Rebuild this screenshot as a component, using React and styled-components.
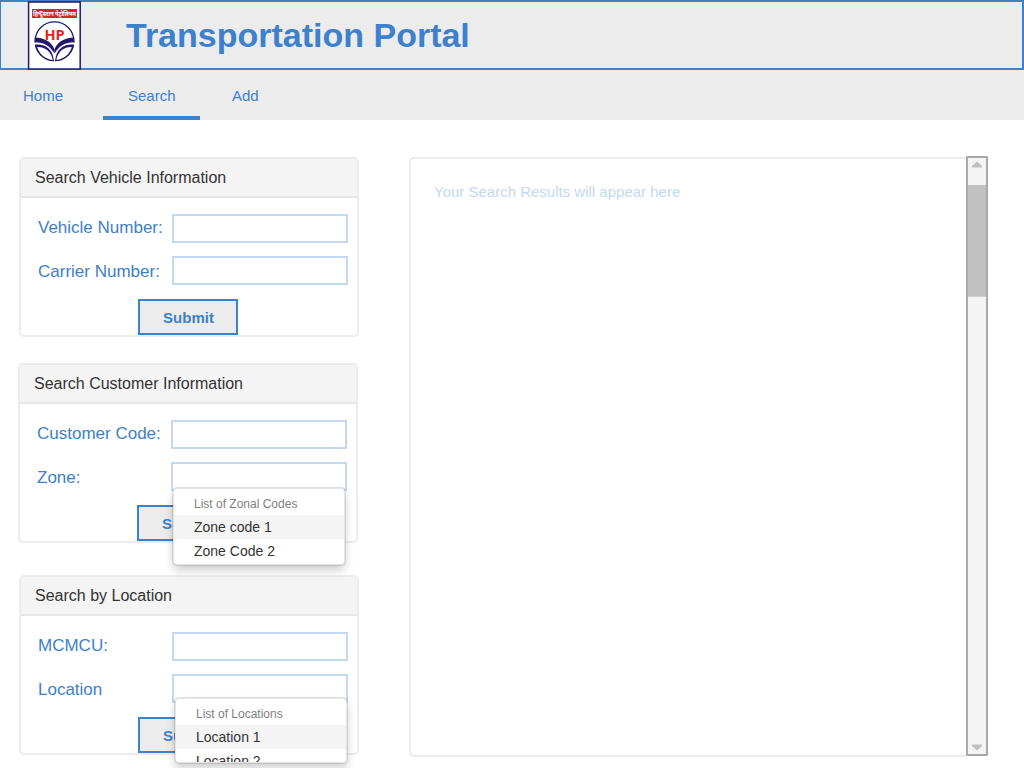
import React from "react";
import styled, { createGlobalStyle } from "styled-components";

const GlobalStyle = createGlobalStyle`
  *, *::before, *::after { box-sizing: border-box; }
  body {
    margin: 0;
    background: #fff;
    font-family: "Liberation Sans", Arial, sans-serif;
  }
`;

const blue = "#3d80cc";
const paleBlue = "#c3d9f1";

const Page = styled.div`
  width: 1024px;
  height: 768px;
  overflow: hidden;
`;

const Header = styled.header`
  display: flex;
  align-items: center;
  height: 70px;
  padding-left: 26px;
  background: #ececec;
  border: 2px solid ${blue};
  border-left-width: 1px;
`;

const Logo = styled.svg`
  display: block;
  flex: none;
  width: 54px;
  height: 70px;
`;

const Title = styled.h1`
  margin: 0 0 0 45px;
  color: ${blue};
  font-size: 34px;
  line-height: 40px;
  font-weight: bold;
`;

const Nav = styled.nav`
  display: flex;
  height: 50px;
  background: #ececec;
`;

const Tab = styled.a`
  flex: none;
  width: ${(p) => p.$width}px;
  height: 50px;
  padding-left: ${(p) => p.$indent}px;
  border-bottom: 4px solid ${(p) => (p.$active ? blue : "transparent")};
  color: ${blue};
  font-size: 15px;
  line-height: 52px;
`;

const Content = styled.main`
  display: flex;
  align-items: flex-start;
  padding: 36px 36px 0 18px;
`;

const Forms = styled.div`
  display: flex;
  flex-direction: column;
  width: 341px;
  margin-top: 1px;
`;

const Panel = styled.section`
  position: relative;
  width: 340px;
  height: 180px;
  margin: 0 0 ${(p) => p.$gap || 0}px ${(p) => p.$shift || 0}px;
  border: 2px solid #ececec;
  border-radius: 5px;
  background: #fff;
`;

const PanelTitle = styled.h2`
  margin: 0;
  height: 39px;
  padding-left: 14px;
  background: #f4f4f4;
  border-bottom: 2px solid #e6e6e6;
  color: #333;
  font-size: 16px;
  line-height: 37px;
  font-weight: normal;
`;

const Fields = styled.div`
  display: flex;
  flex-direction: column;
  gap: 13px;
  padding: 16px 9px 0 17px;
`;

const Field = styled.label`
  display: flex;
  justify-content: space-between;
  height: 29px;
  color: ${blue};
  font-size: 17px;
  line-height: ${(p) => (p.$low ? 32 : 28)}px;
`;

const Input = styled.input`
  width: 176px;
  height: 29px;
  margin: 0;
  padding: 0 6px;
  border: 2px solid ${paleBlue};
  border-radius: 0;
  background: #fff;
  outline: none;
`;

const Submit = styled.button`
  display: block;
  width: 100px;
  height: 36px;
  margin: 14px 0 0 117px;
  padding: 2px 0 0 1px;
  border: 2px solid ${blue};
  background: #ececec;
  color: ${blue};
  font: bold 15px/30px "Liberation Sans", Arial, sans-serif;
`;

const Menu = styled.div`
  position: absolute;
  z-index: 2;
  left: ${(p) => p.$left}px;
  top: ${(p) => p.$top}px;
  width: 172px;
  height: ${(p) => p.$height}px;
  padding-top: 4px;
  overflow: hidden;
  border: 1px solid #e4e4e4;
  border-radius: 4px;
  background: #fff;
  box-shadow: 0 0 0 1px rgba(0, 0, 0, 0.1), 0 5px 10px rgba(0, 0, 0, 0.2);
`;

const MenuTitle = styled.div`
  height: 22px;
  padding-left: 20px;
  color: #808080;
  font-size: 12px;
  line-height: 22px;
`;

const MenuItem = styled.div`
  height: 24px;
  padding-left: 20px;
  background: ${(p) => (p.$active ? "#f4f4f4" : "#fff")};
  color: #333;
  font-size: 14px;
  line-height: 24px;
`;

const Results = styled.section`
  display: flex;
  margin-left: 50px;
`;

const ResultsBody = styled.div`
  width: 557px;
  height: 600px;
  margin-top: 1px;
  padding: 23px;
  border: 2px solid #ececec;
  border-right: 0;
  border-radius: 5px 0 0 5px;
  color: ${paleBlue};
  font-size: 15px;
  line-height: 20px;
`;

const Scrollbar = styled.div`
  display: flex;
  flex-direction: column;
  width: 22px;
  height: 600px;
  border: 2px solid #aaa;
  border-radius: 1px;
  background: #f4f4f4;
`;

const Arrow = styled.svg`
  display: block;
  flex: none;
  width: 18px;
  height: 27px;
`;

const Track = styled.div`
  flex: 1;
`;

const Thumb = styled.div`
  height: 112px;
  background: #c0c0c0;
  border-bottom: 1px solid #cfcfcf;
`;

function Wing({ transform }) {
  return (
    <g transform={transform} fill="#24186b">
      <path d="M6 42.4H12L10 45H6Z" fill="#fff" />
      <path d="M7.8 37.6C16.5 37.6 24.5 41.5 27.5 49.5V53.6C23 45.5 16 42 7.8 42.2Z" />
      <path d="M8 44.6C18.5 43.6 26 49 26.9 61.2C16.5 60.4 9.6 53.6 8 44.6Z" />
      <path d="M10.2 47C18 46.8 24.3 51.4 25.7 60C17.8 59 12.2 54 10.2 47Z" fill="#fff" />
    </g>
  );
}

function CompanyLogo() {
  return (
    <Logo viewBox="0 0 54 70" role="img">
      <rect x="1.6" y="2" width="51.6" height="67" fill="#fff" stroke="#24186b" strokeWidth="1.5" />
      <rect x="5" y="9" width="45" height="9" fill="#da241f" />
      <text
        x="27.5"
        y="15.6"
        fill="#fff"
        fontFamily="'Noto Sans', 'Liberation Sans', sans-serif"
        fontSize="6.5"
        fontWeight="bold"
        textAnchor="middle"
        textLength="43"
        lengthAdjust="spacingAndGlyphs"
      >
        हिन्दुस्तान पेट्रोलियम
      </text>
      <circle cx="27.5" cy="41.2" r="19.4" fill="#fff" stroke="#24186b" strokeWidth="1.3" />
      <rect x="26.9" y="57" width="1.2" height="5.2" fill="#fff" />
      <Wing />
      <Wing transform="translate(55 0) scale(-1 1)" />
      <text
        x="27.6"
        y="39.8"
        fill="#e0251f"
        fontFamily="'Open Sans', 'Noto Sans', sans-serif"
        fontSize="14.5"
        fontWeight="bold"
        textAnchor="middle"
      >
        HP
      </text>
    </Logo>
  );
}

function SearchPanel({ title, labels, gap, shift, children }) {
  return (
    <Panel $gap={gap} $shift={shift}>
      <PanelTitle>{title}</PanelTitle>
      <Fields>
        {labels.map((label, i) => (
          <Field key={label} $low={i > 0}>
            {label}
            <Input />
          </Field>
        ))}
      </Fields>
      <Submit>Submit</Submit>
      {children}
    </Panel>
  );
}

export default function App() {
  return (
    <Page>
      <GlobalStyle />
      <Header>
        <CompanyLogo />
        <Title>Transportation Portal</Title>
      </Header>
      <Nav>
        <Tab $width={103} $indent={23}>Home</Tab>
        <Tab $width={97} $indent={25} $active>Search</Tab>
        <Tab $width={90} $indent={32}>Add</Tab>
      </Nav>
      <Content>
        <Forms>
          <SearchPanel
            title="Search Vehicle Information"
            labels={["Vehicle Number:", "Carrier Number:"]}
            gap={26}
            shift={1}
          />
          <SearchPanel
            title="Search Customer Information"
            labels={["Customer Code:", "Zone:"]}
            gap={32}
          >
            <Menu $left={153} $top={123} $height={77}>
              <MenuTitle>List of Zonal Codes</MenuTitle>
              <MenuItem $active>Zone code 1</MenuItem>
              <MenuItem>Zone Code 2</MenuItem>
            </Menu>
          </SearchPanel>
          <SearchPanel
            title="Search by Location"
            labels={["MCMCU:", "Location"]}
            shift={1}
          >
            <Menu $left={154} $top={121} $height={65}>
              <MenuTitle>List of Locations</MenuTitle>
              <MenuItem $active>Location 1</MenuItem>
              <MenuItem>Location 2</MenuItem>
            </Menu>
          </SearchPanel>
        </Forms>
        <Results>
          <ResultsBody>Your Search Results will appear here</ResultsBody>
          <Scrollbar>
            <Arrow viewBox="0 0 18 27">
              <path d="M4 9.5V8L9 3.6L14 8V9.5Z" fill="#c0c0c0" />
            </Arrow>
            <Track>
              <Thumb />
            </Track>
            <Arrow viewBox="0 0 18 27">
              <path d="M4 17.5V19L9 23.4L14 19V17.5Z" fill="#c0c0c0" />
            </Arrow>
          </Scrollbar>
        </Results>
      </Content>
    </Page>
  );
}
